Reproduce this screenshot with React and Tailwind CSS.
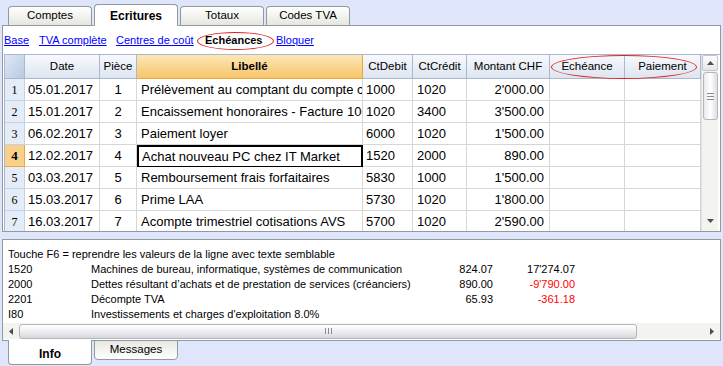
const rows = [
  ['05.01.2017', '1', 'Prélèvement au comptant du compte courant', '1000', '1020', "2'000.00"],
  ['15.01.2017', '2', 'Encaissement honoraires - Facture 1001', '1020', '3400', "3'500.00"],
  ['06.02.2017', '3', 'Paiement loyer', '6000', '1020', "1'500.00"],
  ['12.02.2017', '4', 'Achat nouveau PC chez IT Market', '1520', '2000', '890.00'],
  ['03.03.2017', '5', 'Remboursement frais forfaitaires', '5830', '1000', "1'500.00"],
  ['15.03.2017', '6', 'Prime LAA', '5730', '1020', "1'800.00"],
  ['16.03.2017', '7', 'Acompte trimestriel cotisations AVS', '5700', '1020', "2'590.00"],
];

const info = [
  ['1520', 'Machines de bureau, informatique, systèmes de communication', '824.07', "17'274.07", false],
  ['2000', 'Dettes résultant d’achats et de prestation de services (créanciers)', '890.00', "-9'790.00", true],
  ['2201', 'Décompte TVA', '65.93', '-361.18', true],
  ['I80', "Investissements et charges d'exploitation 8.0%", '', '', false],
];

const font = { fontFamily: '"Liberation Sans", Arial, sans-serif' };

const Tab = ({ label, active }) =>
  active ? (
    <div className="w-[84px] h-[22px] -mb-px relative z-10 bg-white border border-b-0 border-[#919b9c] rounded-t-[4px] flex items-center justify-center text-[12px] font-bold text-black">
      {label}
    </div>
  ) : (
    <div className="w-[84px] h-[19px] bg-gradient-to-b from-white to-[#e6e6e0] border border-b-0 border-[#919b9c] rounded-t-[4px] flex items-center justify-center text-[11.5px] text-black">
      {label}
    </div>
  );

export default function App() {
  return (
    <div className="w-[723px] h-[366px] bg-[#dfe5fb] overflow-hidden relative" style={font}>
      {/* top tabs */}
      <div className="flex items-end gap-[2px] pl-[8px] h-[25px]">
        <Tab label="Comptes" />
        <Tab label="Ecritures" active />
        <Tab label="Totaux" />
        <Tab label="Codes TVA" />
      </div>

      {/* main panel */}
      <div className="mx-[2px] h-[207px] bg-white border border-[#919b9c] relative overflow-hidden">
        <div className="h-[28px] flex items-center pl-[1px] text-[11px] whitespace-nowrap relative">
          <span className="w-[35px] text-[#0000ff]"><span className="underline">Base</span></span>
          <span className="w-[77px] text-[#0000ff]"><span className="underline">TVA complète</span></span>
          <span className="w-[89px] text-[#0000ff]"><span className="underline">Centres de coût</span></span>
          <span className="w-[71px] font-bold text-black">Echéances</span>
          <span className="text-[#0000ff] underline">Bloquer</span>
          <div className="absolute left-[194px] top-[6px] w-[77px] h-[18px] border border-[#e02020] rounded-[50%]" />
        </div>

        <div className="flex ml-[1px] border-l border-t border-[#a9b8cf] relative">
          <div className="w-[696px]">
            {/* header */}
            <div className="flex h-[24px] text-[11.5px] text-black">
              <div className="w-[20px] bg-gradient-to-br from-[#dfe7f5] to-[#b8c9e4] border-r border-b border-[#a9b8cf]" />
              {[
                ['Date', 'w-[75px]'],
                ['Pièce', 'w-[37px]'],
              ].map(([t, w]) => (
                <div key={t} className={`${w} bg-gradient-to-b from-[#f7f9fc] to-[#dde5f0] border-r border-b border-[#a9b8cf] flex items-center justify-center`}>
                  {t}
                </div>
              ))}
              <div className="w-[226px] bg-gradient-to-b from-[#fde7b4] to-[#f7c46a] border-r border-b border-[#e8a83c] flex items-center justify-center font-bold">
                Libellé
              </div>
              {[
                ['CtDebit', 'w-[50px]'],
                ['CtCrédit', 'w-[54px]'],
                ['Montant CHF', 'w-[83px]'],
                ['Echéance', 'w-[75px]'],
                ['Paiement', 'w-[76px]'],
              ].map(([t, w]) => (
                <div key={t} className={`${w} bg-gradient-to-b from-[#f7f9fc] to-[#dde5f0] border-r border-b border-[#a9b8cf] flex items-center justify-center`}>
                  {t}
                </div>
              ))}
            </div>

            {/* rows */}
            {rows.map((r, i) => {
              const sel = i === 3;
              return (
                <div key={i} className="flex h-[22px] text-[13px] text-black">
                  <div
                    className={`w-[20px] border-r border-b flex items-center justify-center text-[12px] ${
                      sel ? 'bg-[#f9d08a] border-[#e8a83c] font-bold text-[13px]' : 'bg-[#e4ecf7] border-[#c5d2e6]'
                    }`}
                    style={{ fontFamily: '"Liberation Serif", serif' }}
                  >
                    {i + 1}
                  </div>
                  <div className="w-[75px] border-r border-b border-[#d6d6d6] flex items-center pl-[3px]">{r[0]}</div>
                  <div className="w-[37px] border-r border-b border-[#d6d6d6] flex items-center justify-center">{r[1]}</div>
                  <div
                    className={`w-[226px] border-b flex items-center whitespace-nowrap overflow-hidden ${
                      sel ? 'border-2 border-black pl-[3px]' : 'border-r border-[#d6d6d6] pl-[4px]'
                    }`}
                  >
                    {r[2]}
                  </div>
                  <div className="w-[50px] border-r border-b border-[#d6d6d6] flex items-center pl-[3px]">{r[3]}</div>
                  <div className="w-[54px] border-r border-b border-[#d6d6d6] flex items-center pl-[4px]">{r[4]}</div>
                  <div className="w-[83px] border-r border-b border-[#d6d6d6] flex items-center justify-end pr-[5px]">{r[5]}</div>
                  <div className="w-[75px] border-r border-b border-[#d6d6d6]" />
                  <div className="w-[76px] border-r border-b border-[#d6d6d6]" />
                </div>
              );
            })}
          </div>

          {/* vertical scrollbar */}
          <div className="w-[17px] h-[176px] bg-[#f3f3ef] border-l border-[#e0e0e0] flex flex-col items-center">
            <div className="w-[16px] h-[16px] bg-gradient-to-b from-white to-[#e4e4ea] border border-[#c6c6c6] rounded-[2px] flex items-center justify-center">
              <svg width="7" height="4" viewBox="0 0 7 4"><path d="M0 4 L3.5 0 L7 4 Z" fill="#4d4d4d" /></svg>
            </div>
            <div className="w-[15px] h-[48px] mt-[1px] bg-gradient-to-r from-[#e9e9ee] via-white to-[#dedee4] border border-[#b5b5bd] rounded-[3px] flex flex-col items-center justify-center gap-[2px]">
              <div className="w-[7px] h-px bg-[#8a8a90]" />
              <div className="w-[7px] h-px bg-[#8a8a90]" />
              <div className="w-[7px] h-px bg-[#8a8a90]" />
            </div>
            <div className="flex-1" />
            <div className="w-[16px] h-[16px] flex items-center justify-center mb-[2px]">
              <svg width="7" height="4" viewBox="0 0 7 4"><path d="M0 0 L7 0 L3.5 4 Z" fill="#4d4d4d" /></svg>
            </div>
          </div>

          <div className="absolute left-[546px] top-[0px] w-[146px] h-[24px] border border-[#e02020] rounded-[50%]" />
        </div>
      </div>

      {/* info panel */}
      <div className="mx-[2px] mt-[7px] h-[102px] bg-white border border-[#919b9c] flex flex-col text-[11px] text-black">
        <div className="pl-[5px] pt-[7px] flex-1">
          <div className="h-[15px] leading-[15px]">Touche F6 = reprendre les valeurs de la ligne avec texte semblable</div>
          {info.map(([c, d, a, b, red]) => (
            <div key={c} className="h-[15px] leading-[15px] flex whitespace-nowrap">
              <div className="w-[83px]">{c}</div>
              <div className="w-[329px]">{d}</div>
              <div className="w-[73px] text-right">{a}</div>
              <div className={`w-[82px] text-right ${red ? 'text-[#ff0000]' : ''}`}>{b}</div>
            </div>
          ))}
        </div>
        {/* horizontal scrollbar */}
        <div className="h-[16px] flex items-center bg-[#f3f3ef] mb-[1px]">
          <div className="w-[16px] h-[16px] flex items-center justify-center">
            <svg width="4" height="7" viewBox="0 0 4 7"><path d="M4 0 L0 3.5 L4 7 Z" fill="#4d4d4d" /></svg>
          </div>
          <div className="w-[618px] h-[15px] bg-gradient-to-b from-white via-[#eeeef2] to-[#d6d6dc] border border-[#b5b5bd] rounded-[3px] flex items-center justify-center gap-[2px]">
            <div className="w-px h-[6px] bg-[#8a8a90]" />
            <div className="w-px h-[6px] bg-[#8a8a90]" />
            <div className="w-px h-[6px] bg-[#8a8a90]" />
          </div>
          <div className="flex-1" />
          <div className="w-[16px] h-[16px] flex items-center justify-center">
            <svg width="4" height="7" viewBox="0 0 4 7"><path d="M0 0 L4 3.5 L0 7 Z" fill="#4d4d4d" /></svg>
          </div>
        </div>
      </div>

      {/* bottom tabs */}
      <div className="flex items-start gap-[2px] pl-[8px] -mt-px relative">
        <div className="w-[84px] h-[25px] bg-white border border-t-0 border-[#919b9c] rounded-b-[4px] flex items-center justify-center text-[12px] font-bold pt-[3px]">
          Info
        </div>
        <div className="w-[84px] h-[20px] bg-gradient-to-b from-[#e8e8e4] to-white border border-[#919b9c] rounded-b-[4px] flex items-center justify-center text-[11.5px]">
          Messages
        </div>
      </div>
    </div>
  );
}
